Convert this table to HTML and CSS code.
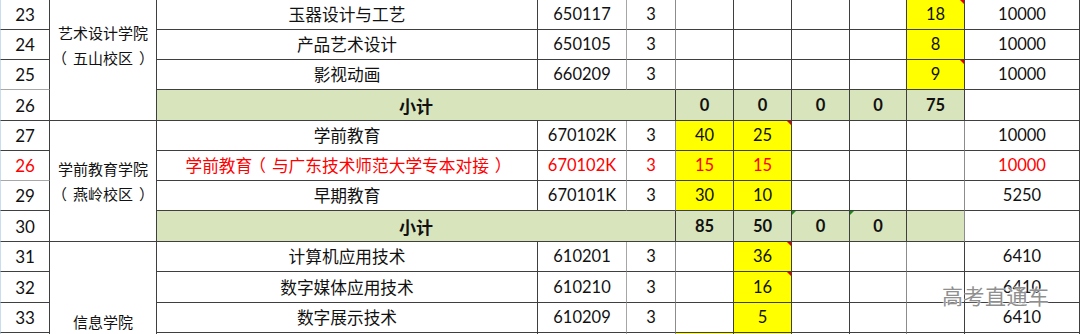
FILE: index.html
```html
<!DOCTYPE html>
<html lang="zh">
<head>
<meta charset="utf-8">
<title>招生计划表</title>
<link rel="stylesheet" href="styles.css">
</head>
<body>
<div class="sheet">
  <!-- row 23 -->
  <div class="c idx">23</div>
  <div class="c college college-art"><span>艺术设计学院</span><span><span class="po">（</span>五山校区<span class="pc">）</span></span></div>
  <div class="c major">玉器设计与工艺</div>
  <div class="c code lt">650117</div>
  <div class="c yrs lt2">3</div>
  <div class="c"></div>
  <div class="c"></div>
  <div class="c"></div>
  <div class="c"></div>
  <div class="c yel mark-r">18</div>
  <div class="c fee">10000</div>
  <!-- row 24 -->
  <div class="c idx">24</div>
  <div class="c major">产品艺术设计</div>
  <div class="c code lt">650105</div>
  <div class="c yrs lt2">3</div>
  <div class="c"></div>
  <div class="c"></div>
  <div class="c"></div>
  <div class="c"></div>
  <div class="c yel">8</div>
  <div class="c fee">10000</div>
  <!-- row 25 -->
  <div class="c idx idx-soft">25</div>
  <div class="c major">影视动画</div>
  <div class="c code lt">660209</div>
  <div class="c yrs lt2">3</div>
  <div class="c"></div>
  <div class="c"></div>
  <div class="c"></div>
  <div class="c"></div>
  <div class="c yel mark-r">9</div>
  <div class="c fee">10000</div>
  <!-- row 26 subtotal -->
  <div class="c idx">26</div>
  <div class="c sub sub-label">小计</div>
  <div class="c sub">0</div>
  <div class="c sub">0</div>
  <div class="c sub">0</div>
  <div class="c sub">0</div>
  <div class="c sub">75</div>
  <div class="c fee"></div>
  <!-- row 27 -->
  <div class="c idx">27</div>
  <div class="c college college-edu"><span>学前教育学院</span><span><span class="po">（</span>燕岭校区<span class="pc">）</span></span></div>
  <div class="c major">学前教育</div>
  <div class="c code lt">670102K</div>
  <div class="c yrs lt2">3</div>
  <div class="c yel">40</div>
  <div class="c yel mark-r">25</div>
  <div class="c"></div>
  <div class="c"></div>
  <div class="c lt2"></div>
  <div class="c fee">10000</div>
  <!-- row 26 (red) -->
  <div class="c idx red idx-soft">26</div>
  <div class="c major red">学前教育<span class="po">（</span>与广东技术师范大学专本对接<span class="pc">）</span></div>
  <div class="c code lt red">670102K</div>
  <div class="c yrs lt2 red">3</div>
  <div class="c yel red">15</div>
  <div class="c yel red">15</div>
  <div class="c"></div>
  <div class="c"></div>
  <div class="c lt2"></div>
  <div class="c fee red">10000</div>
  <!-- row 29 -->
  <div class="c idx">29</div>
  <div class="c major">早期教育</div>
  <div class="c code lt">670101K</div>
  <div class="c yrs lt2">3</div>
  <div class="c yel">30</div>
  <div class="c yel">10</div>
  <div class="c"></div>
  <div class="c"></div>
  <div class="c lt2"></div>
  <div class="c fee">5250</div>
  <!-- row 30 subtotal -->
  <div class="c idx">30</div>
  <div class="c sub sub-label">小计</div>
  <div class="c sub">85</div>
  <div class="c sub">50</div>
  <div class="c sub mark-g">0</div>
  <div class="c sub mark-g">0</div>
  <div class="c sub lt2"></div>
  <div class="c fee"></div>
  <!-- row 31 -->
  <div class="c idx">31</div>
  <div class="c college college-info"><span>信息学院</span></div>
  <div class="c major">计算机应用技术</div>
  <div class="c code lt">610201</div>
  <div class="c yrs lt2">3</div>
  <div class="c"></div>
  <div class="c yel mark-r">36</div>
  <div class="c"></div>
  <div class="c lt2"></div>
  <div class="c"></div>
  <div class="c fee">6410</div>
  <!-- row 32 -->
  <div class="c idx">32</div>
  <div class="c major">数字媒体应用技术</div>
  <div class="c code lt">610210</div>
  <div class="c yrs lt2">3</div>
  <div class="c"></div>
  <div class="c yel mark-r">16</div>
  <div class="c"></div>
  <div class="c lt2"></div>
  <div class="c"></div>
  <div class="c fee">6410</div>
  <!-- row 33 -->
  <div class="c idx">33</div>
  <div class="c major">数字展示技术</div>
  <div class="c code lt">610209</div>
  <div class="c yrs lt2">3</div>
  <div class="c"></div>
  <div class="c yel">5</div>
  <div class="c"></div>
  <div class="c lt2"></div>
  <div class="c"></div>
  <div class="c fee">6410</div>
  <!-- row 34 (cut off) -->
  <div class="c idx"></div>
  <div class="c major"></div>
  <div class="c code lt"></div>
  <div class="c yrs lt2"></div>
  <div class="c yel"></div>
  <div class="c yel"></div>
  <div class="c"></div>
  <div class="c lt2"></div>
  <div class="c"></div>
  <div class="c fee"></div>
</div>
<div class="watermark">高考直通车</div>
</body>
</html>
```

FILE: styles.css
```css
html, body {
  margin: 0;
  padding: 0;
  background: #ffffff;
  width: 1080px;
  height: 334px;
  overflow: hidden;
}

body {
  position: relative;
  font-family: Lato, "Noto Sans CJK SC", sans-serif;
  color: #111111;
}

.sheet {
  display: grid;
  grid-template-columns: 50px 107px 381px 89px 49px 58px 58px 58px 57px 58px 115px;
  grid-template-rows: 30px 30px 30px 31px 30px 30px 30px 31px 30px 31px 30px 30px;
}

.c {
  box-sizing: border-box;
  border-right: 1px solid #3f3f3f;
  border-bottom: 1px solid #3f3f3f;
  display: flex;
  align-items: center;
  justify-content: center;
  font-size: 16.5px;
  line-height: 1;
  position: relative;
  white-space: nowrap;
  background: #ffffff;
}

.idx {
  border-left: 1px solid #c9dcf0;
  font-size: 17px;
}

.idx-soft {
  border-bottom-color: #a8a8a8;
}

.college {
  grid-column: 2;
  flex-direction: column;
  font-family: "Noto Sans CJK SC", sans-serif;
  font-size: 15px;
  line-height: 25px;
}

.college-art {
  grid-row: 1 / span 4;
  padding-bottom: 31px;
}

.college-edu {
  grid-row: 5 / span 4;
}

.college-info {
  grid-row: 9 / span 4;
  padding-top: 38px;
}

.po {
  position: relative;
  left: -3px;
  margin-right: 3px;
}

.pc {
  position: relative;
  left: 3px;
  margin-left: 3px;
}

.major {
  font-family: "Noto Sans CJK SC", sans-serif;
  font-size: 16.7px;
  letter-spacing: 0;
}

.lt {
  border-right: 1px solid #a6a6a6;
}

.lt2 {
  border-right-color: #8c8c8c;
}

.yel {
  background: #ffff00;
}

.red {
  color: #ff0000;
}

.sub {
  background: #d8e4bc;
  font-weight: 700;
}

.sub-label {
  grid-column: 3 / span 3;
  font-family: "Noto Sans CJK SC", sans-serif;
  font-size: 17px;
}

.mark-r::after {
  content: "";
  position: absolute;
  top: 0;
  right: 0;
  border-top: 4px solid #e00000;
  border-left: 4px solid transparent;
}

.mark-g::before {
  content: "";
  position: absolute;
  top: 0;
  left: 0;
  border-top: 4px solid #1a8a1a;
  border-right: 4px solid transparent;
}

.watermark {
  position: absolute;
  left: 942px;
  top: 283px;
  font-family: "Noto Sans CJK SC", sans-serif;
  font-size: 21px;
  line-height: 24px;
  color: #8f8f8f;
  letter-spacing: 0.5px;
  text-shadow: 0 0 2px #ffffff, 0 0 1px #ffffff;
}
```
